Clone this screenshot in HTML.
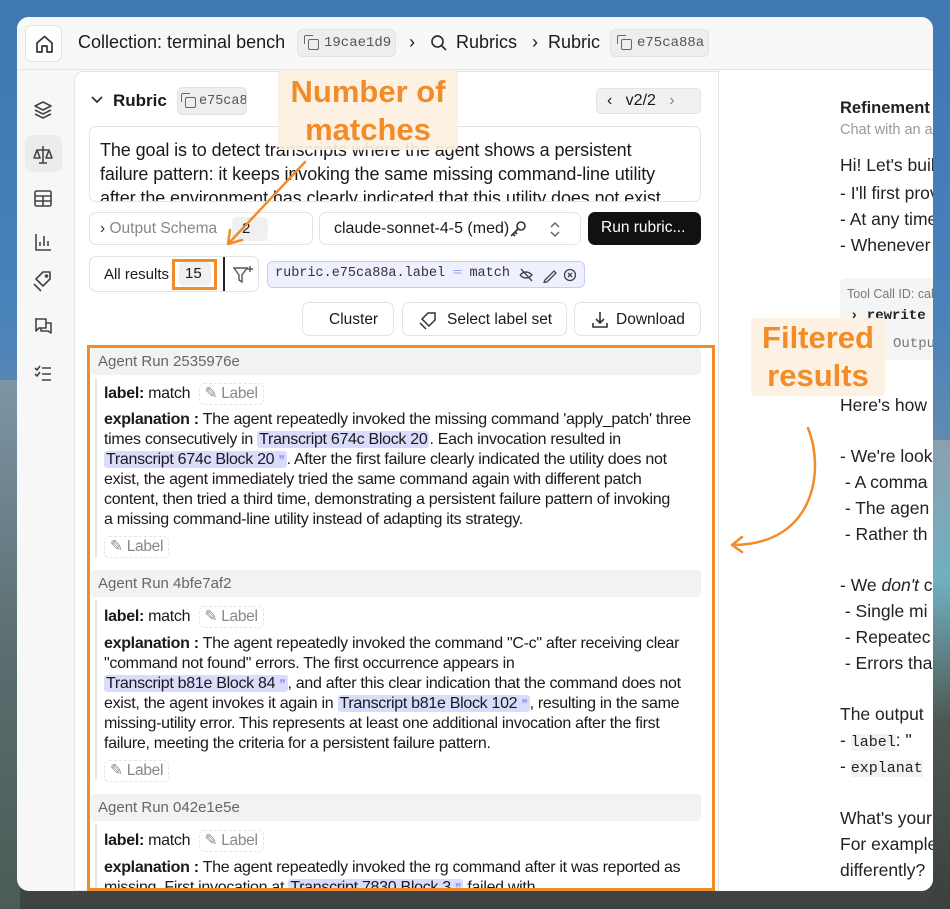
<!DOCTYPE html>
<html><head><meta charset="utf-8">
<style>
*{box-sizing:border-box;margin:0;padding:0}
body{width:950px;height:909px;overflow:hidden;position:relative;font-family:"Liberation Sans",sans-serif;color:#1a1a1a;
background:linear-gradient(180deg,#3f78b2 0%,#4a82ba 35%,#6b8fab 55%,#5f7a86 70%,#4d5a5a 85%,#3c4240 100%);}
.abs{position:absolute}
.win{position:absolute;left:17px;top:17px;width:916px;height:874px;background:#f7f7f7;border-radius:12px;overflow:hidden}
.chip{position:absolute;background:#eeeeee;border:1px solid #e2e2e2;border-radius:6px;font-family:"Liberation Mono",monospace;font-size:14px;color:#555;display:flex;align-items:center;padding-left:6px;gap:5px}
.cp{width:11px;height:11px;border:1.5px solid #666;border-radius:2px;position:relative;margin-left:4px;margin-top:3px;flex:none}
.cp:before{content:"";position:absolute;left:-5px;top:-5px;width:8px;height:8px;border-left:1.5px solid #666;border-top:1.5px solid #666;border-radius:2px 0 0 0}
.box{position:absolute;background:#fff;border:1px solid #e3e3e3;border-radius:7px}
.t{position:absolute;white-space:nowrap}
.exp{position:absolute;font-size:16px;line-height:20px;white-space:nowrap;letter-spacing:-0.3px}
.hl{background:#d9dcfd;border-radius:3px;padding:0 2px}
.q{color:#8f96f0;font-size:12px}
.lbtn{display:inline-block;border:1.5px dashed #e4e4e4;border-radius:5px;color:#888;padding:0 5px;font-size:15.5px;line-height:20px}
.runh{position:absolute;left:91px;width:610px;height:27px;background:#f2f2f2;border-radius:4px;font-size:15px;color:#666;padding:5px 7px}
.vline{position:absolute;left:95px;width:2px;background:#e8e8e8}
.rp{position:absolute;left:840px;font-size:17.5px;white-space:nowrap;color:#222}
.ann{position:absolute;background:rgba(253,240,226,0.92);color:#f28c28;font-weight:bold;font-size:31px;text-align:center;line-height:38px;border-radius:4px}
</style></head><body>
<div class="abs" style="left:0;top:380px;width:20px;height:529px;background:linear-gradient(180deg,#7d95a6,#5b6e70 50%,#4b5c56)"></div>
<div class="abs" style="left:933px;top:440px;width:17px;height:469px;background:linear-gradient(180deg,#8aa0b0,#6fb0c0 30%,#4e5852 60%,#3d403d)"></div>
<div class="win">
  <div class="abs" style="left:0;top:0;width:916px;height:53px;border-bottom:1px solid #e6e6e6;background:#f8f8f8"></div>
</div>
<div class="box" style="left:25px;top:25px;width:37px;height:37px;border-radius:7px">
<svg width="37" height="37" viewBox="0 0 37 37"><path d="M11 17 L18.5 10.5 L26 17 V26 H21 V20 H16 V26 H11 Z" fill="none" stroke="#333" stroke-width="1.7" stroke-linejoin="round"/></svg></div>
<div class="t" style="left:78px;top:32px;font-size:18px">Collection: terminal bench</div>
<div class="chip" style="left:297px;top:29px;width:99px;height:28px"><span class="cp"></span>19cae1d9</div>
<div class="t" style="left:409px;top:32px;font-size:18px">›</div>
<svg class="abs" style="left:430px;top:34px" width="18" height="18"><circle cx="7.5" cy="7.5" r="5.5" fill="none" stroke="#333" stroke-width="1.7"/><path d="M11.5 11.5 L16 16" stroke="#333" stroke-width="1.7"/></svg>
<div class="t" style="left:456px;top:32px;font-size:18px">Rubrics</div>
<div class="t" style="left:532px;top:32px;font-size:18px">›</div>
<div class="t" style="left:548px;top:32px;font-size:18px">Rubric</div>
<div class="chip" style="left:610px;top:29px;width:99px;height:28px"><span class="cp"></span>e75ca88a</div>
<div class="abs" style="left:25px;top:135px;width:37px;height:37px;background:#ececec;border-radius:7px"></div>
<svg class="abs" style="left:30px;top:96px" width="26" height="300" viewBox="0 0 26 300" fill="none" stroke="#444" stroke-width="1.6" stroke-linejoin="round">
<path d="M13 6 L21 10 L13 14 L5 10 Z M5 14 L13 18 L21 14 M5 18 L13 22 L21 18"/>
<path d="M13 50 V67 M7 54 H19 M9 67 H17 M7 54 L4 62 H10 Z M19 54 L16 62 H22 Z"/>
<rect x="5" y="95" width="16" height="15" rx="1.5"/><path d="M5 100 H21 M5 105 H21 M13 100 V110"/>
<path d="M6 138 V154 H21 M10 150 V146 M14 150 V140 M18 150 V145"/>
<path d="M6 183 L13 176 H20 V183 L13 190 Z M4 188 L11 195"/><circle cx="16.5" cy="180" r="1"/>
<path d="M5 223 H16 V232 H9 L6 235 V223 M16 227 H21 V237 L18 235 H11 V232"/>
<path d="M5 272 L7 274 L10 270 M12 272 H21 M5 278 L7 280 L10 276 M12 278 H21 M12 284 H21"/>
</svg>
<div class="abs" style="left:74px;top:71px;width:645px;height:820px;background:#fff;border:1px solid #e6e6e6;border-radius:10px 0 0 0"></div>
<div class="abs" style="left:718px;top:70px;width:215px;height:821px;background:#fff;border-left:1px solid #e6e6e6;border-radius:0 0 12px 0"></div>
<svg class="abs" style="left:91px;top:95px" width="12" height="10"><path d="M1 2 L6 7 L11 2" fill="none" stroke="#333" stroke-width="1.8"/></svg>
<div class="t" style="left:113px;top:91px;font-size:17px;font-weight:bold">Rubric</div>
<div class="chip" style="left:177px;top:87px;width:70px;height:28px;font-size:13.5px;padding-left:3px;gap:3px;overflow:hidden"><span class="cp"></span>e75ca88a</div>
<div class="abs" style="left:596px;top:88px;width:105px;height:26px;background:#f1f1f1;border:1px solid #e4e4e4;border-radius:5px;font-size:16px;padding:3px 10px;white-space:nowrap">‹ &nbsp;&nbsp;v2/2 &nbsp;&nbsp;<span style="color:#888">›</span></div>
<div class="box" style="left:89px;top:126px;width:612px;height:76px;overflow:hidden">
<div class="t" style="left:10px;top:11px;font-size:18px;line-height:24px;letter-spacing:-0.1px">The goal is to detect transcripts where the agent shows a persistent<br>failure pattern: it keeps invoking the same missing command-line utility<br>after the environment has clearly indicated that this utility does not exist</div></div>
<div class="box" style="left:89px;top:212px;width:224px;height:33px"><div class="t" style="left:10px;top:7px;font-size:15.5px;color:#888"><span style="color:#333">›</span> Output Schema</div>
<div class="abs" style="left:142px;top:4px;width:36px;height:24px;background:#f0f0f0;border-radius:5px;font-size:15px;padding:3px 10px">2</div></div>
<div class="box" style="left:319px;top:212px;width:262px;height:33px"><div class="t" style="left:14px;top:7px;font-size:16px">claude-sonnet-4-5 (med)</div>
<svg class="abs" style="left:188px;top:6px" width="20" height="20" fill="none" stroke="#333" stroke-width="1.6"><circle cx="13" cy="7" r="4"/><path d="M10 10 L3 17 M5 15 L7 17 M7 13 L9 15"/></svg>
<svg class="abs" style="left:228px;top:7px" width="14" height="20" fill="none" stroke="#666" stroke-width="1.5"><path d="M3 7 L7 3 L11 7 M3 12 L7 16 L11 12"/></svg></div>
<div class="abs" style="left:588px;top:212px;width:113px;height:33px;background:#111;border-radius:7px;color:#fff;font-size:15.5px;padding:7px 13px;white-space:nowrap">Run rubric...</div>
<div class="box" style="left:89px;top:256px;width:170px;height:36px"><div class="t" style="left:14px;top:9px;font-size:15px">All results</div>
<div class="abs" style="left:89px;top:5px;width:32px;height:24px;background:#f0f0f0;border-radius:5px;font-size:15px;padding:3px 6px">15</div>
<div class="abs" style="left:133px;top:0;width:2px;height:34px;background:#222"></div>
<svg class="abs" style="left:140px;top:6px" width="26" height="24" fill="none" stroke="#555" stroke-width="1.4"><path d="M4 5 H17 L12 12 V19 L9 17 V12 Z M20 3 V9 M17 6 H23"/></svg></div>
<div class="abs" style="left:172px;top:259px;width:45px;height:31px;border:3px solid #f28c28"></div>
<div class="abs" style="left:267px;top:261px;width:318px;height:27px;background:#eff0fe;border:1.5px solid #c9ccf7;border-radius:6px;font-family:'Liberation Mono',monospace;font-size:13.5px;padding:4px 7px;white-space:nowrap;color:#333">rubric.e75ca88a.label <span style="color:#8f96f0">═</span> match
<svg style="position:absolute;left:251px;top:5px" width="60" height="16" fill="none" stroke="#444" stroke-width="1.3"><path d="M1 8 Q7 2 13 8 Q7 14 1 8 M2 2 L13 14"/><path d="M26 13 L35 4 L37 6 L28 15 L25 15.5 Z"/><circle cx="51" cy="8" r="5.5"/><path d="M49 6 L53 10 M53 6 L49 10"/></svg></div>
<div class="box" style="left:302px;top:302px;width:92px;height:34px;font-size:15.5px;padding:8px 0 0 26px">Cluster</div>
<div class="box" style="left:402px;top:302px;width:165px;height:34px;font-size:15.5px;padding:8px 0 0 44px;white-space:nowrap">Select label set
<svg class="abs" style="left:14px;top:7px" width="22" height="20" fill="none" stroke="#333" stroke-width="1.5"><path d="M5 9 L11 3 H18 V10 L12 16 Z M3 13 L9 19"/></svg></div>
<div class="box" style="left:574px;top:302px;width:127px;height:34px;font-size:15.5px;padding:8px 0 0 41px">Download
<svg class="abs" style="left:15px;top:7px" width="20" height="20" fill="none" stroke="#333" stroke-width="1.6"><path d="M10 2 V13 M6 9 L10 13 L14 9 M3 13 V17 H17 V13"/></svg></div>
<div style="position:absolute;left:88px;top:346px;width:626px;height:545px;overflow:hidden">
<div style="position:absolute;left:-88px;top:-346px;width:950px;height:909px">
<div class="runh" style="top:348px">Agent Run 2535976e</div>
<div class="vline" style="top:378px;height:180px"></div>
<div class="exp" style="left:104px;top:383px"><b>label:</b> match&nbsp; <span class="lbtn">✎ Label</span></div>
<div class="exp" style="left:104px;top:410px"><b>explanation :</b> The agent repeatedly invoked the missing command 'apply_patch' three<br>times consecutively in <span class="hl">Transcript 674c Block 20</span>. Each invocation resulted in<br><span class="hl">Transcript 674c Block 20 <span class="q">❞</span></span>. After the first failure clearly indicated the utility does not<br>exist, the agent immediately tried the same command again with different patch<br>content, then tried a third time, demonstrating a persistent failure pattern of invoking<br>a missing command-line utility instead of adapting its strategy.</div>
<div class="exp" style="left:104px;top:536px"><span class="lbtn">✎ Label</span></div>
<div class="runh" style="top:570px">Agent Run 4bfe7af2</div>
<div class="vline" style="top:600px;height:180px"></div>
<div class="exp" style="left:104px;top:606px"><b>label:</b> match&nbsp; <span class="lbtn">✎ Label</span></div>
<div class="exp" style="left:104px;top:634px"><b>explanation :</b> The agent repeatedly invoked the command "C-c" after receiving clear<br>"command not found" errors. The first occurrence appears in<br><span class="hl">Transcript b81e Block 84 <span class="q">❞</span></span>, and after this clear indication that the command does not<br>exist, the agent invokes it again in <span class="hl">Transcript b81e Block 102 <span class="q">❞</span></span>, resulting in the same<br>missing-utility error. This represents at least one additional invocation after the first<br>failure, meeting the criteria for a persistent failure pattern.</div>
<div class="exp" style="left:104px;top:760px"><span class="lbtn">✎ Label</span></div>
<div class="runh" style="top:794px">Agent Run 042e1e5e</div>
<div class="vline" style="top:824px;height:80px"></div>
<div class="exp" style="left:104px;top:830px"><b>label:</b> match&nbsp; <span class="lbtn">✎ Label</span></div>
<div class="exp" style="left:104px;top:858px"><b>explanation :</b> The agent repeatedly invoked the rg command after it was reported as<br>missing. First invocation at <span class="hl">Transcript 7830 Block 3 <span class="q">❞</span></span> failed with</div>
</div></div>
<div class="abs" style="left:87px;top:345px;width:628px;height:546px;border:3px solid #f28c28"></div>
<div style="position:absolute;left:718px;top:70px;width:215px;height:821px;overflow:hidden">
<div style="position:absolute;left:-718px;top:-70px;width:950px;height:909px">
<div class="rp" style="top:99px;font-weight:bold;font-size:16.5px">Refinement</div>
<div class="rp" style="top:122px;color:#999;font-size:14.5px">Chat with an a</div>
<div class="rp" style="top:155px">Hi! Let's build</div>
<div class="rp" style="top:183px">- I'll first prov</div>
<div class="rp" style="top:209px">- At any time</div>
<div class="rp" style="top:235px">- Whenever</div>
<div class="abs" style="left:840px;top:278px;width:100px;height:82px;background:#f5f5f5;border-radius:5px"></div>
<div class="rp" style="top:287px;font-size:12.5px;color:#777;left:847px">Tool Call ID: cal</div>
<div class="rp" style="top:308px;font-size:14px;font-family:'Liberation Mono',monospace;font-weight:bold;left:850px">› rewrite</div>
<div class="rp" style="top:336px;font-size:14px;font-family:'Liberation Mono',monospace;color:#777;left:893px">Output</div>
<div class="rp" style="top:395px">Here's how</div>
<div class="rp" style="top:446px">- We're look</div>
<div class="rp" style="top:472px">&nbsp;- A comma</div>
<div class="rp" style="top:498px">&nbsp;- The agen</div>
<div class="rp" style="top:524px">&nbsp;- Rather th</div>
<div class="rp" style="top:575px">- We <i>don't</i> c</div>
<div class="rp" style="top:601px">&nbsp;- Single mi</div>
<div class="rp" style="top:627px">&nbsp;- Repeatec</div>
<div class="rp" style="top:653px">&nbsp;- Errors tha</div>
<div class="rp" style="top:704px">The output</div>
<div class="rp" style="top:730px">- <span style="font-family:'Liberation Mono',monospace;background:#f2f2f2;font-size:15px">label</span>: "</div>
<div class="rp" style="top:756px">- <span style="font-family:'Liberation Mono',monospace;background:#f2f2f2;font-size:15px">explanat</span></div>
<div class="rp" style="top:808px">What's your</div>
<div class="rp" style="top:834px">For example</div>
<div class="rp" style="top:860px">differently?</div>
</div></div>
<div class="ann" style="left:278px;top:70px;width:180px;height:80px;padding-top:3px">Number of<br>matches</div>
<svg class="abs" style="left:0;top:0" width="950" height="909" fill="none" stroke="#f28c28" stroke-width="2.5" stroke-linecap="round">
<path d="M305 162 L228 244 M228 244 L230 230 M228 244 L242 240"/>
<path d="M808 428 C825 470 815 545 732 545 M732 545 L742 537 M732 545 L742 552"/>
</svg>
<div class="ann" style="left:751px;top:318px;width:134px;height:78px;padding-top:1px">Filtered<br>results</div>
</body></html>
